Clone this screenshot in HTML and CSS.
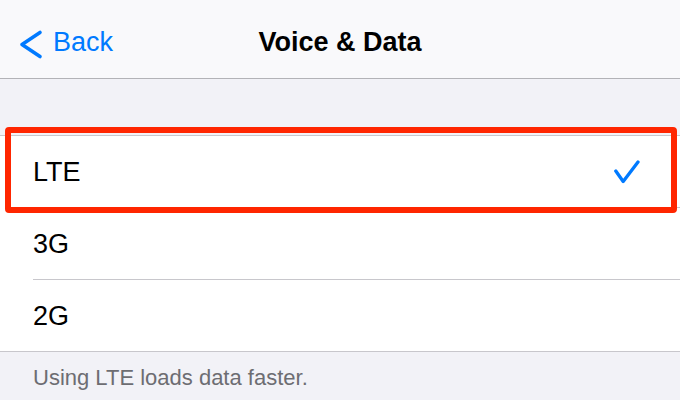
FILE: index.html
```html
<!DOCTYPE html>
<html lang="en">
<head>
  <meta charset="UTF-8">
  <meta name="viewport" content="width=device-width, initial-scale=1.0">
  <title>Voice &amp; Data</title>
  <link rel="stylesheet" href="styles.css">
</head>
<body>
  <div class="nav-bar">
    <a class="back-link" href="#">
      <svg class="back-chevron" width="24" height="32" viewBox="0 0 24 32">
        <polyline points="21,5.5 3,17.5 21,29.5" fill="none" stroke="#007aff" stroke-width="3.6" stroke-linecap="round" stroke-linejoin="round"/>
      </svg>
      <span>Back</span>
    </a>
    <div class="nav-title">Voice &amp; Data</div>
    <div></div>
  </div>

  <div class="settings-group">
    <div class="settings-row selected">
      <span class="row-label">LTE</span>
      <svg class="check-mark" width="26" height="24" viewBox="0 0 26 24">
        <polyline points="1.8,11 9.2,21.5 24,2" fill="none" stroke="#007aff" stroke-width="3.3" stroke-linecap="round" stroke-linejoin="round"/>
      </svg>
      <span class="highlight"></span>
    </div>
    <div class="settings-row">
      <span class="row-label">3G</span>
    </div>
    <div class="settings-row">
      <span class="row-label">2G</span>
    </div>
  </div>

  <p class="group-footer">Using LTE loads data faster.</p>
</body>
</html>
```

FILE: styles.css
```css
body {
  margin: 0;
  padding: 0;
  background-color: #f2f2f7;
  font-family: "Liberation Sans", Arial, sans-serif;
  color: #000;
}

.nav-bar {
  display: grid;
  grid-template-columns: 1fr auto 1fr;
  align-items: center;
  height: 71px;
  padding-top: 7px;
  background-color: #f9f9fb;
  border-bottom: 1px solid #b3b3b7;
}

.back-link {
  display: flex;
  align-items: center;
  padding-left: 19px;
  color: #007aff;
  text-decoration: none;
  font-size: 27px;
}

.back-chevron {
  margin-right: 10px;
}

.nav-title {
  font-size: 27px;
  font-weight: bold;
}

.settings-group {
  margin-top: 56px;
  background-color: #fff;
  border-top: 1px solid #c8c7cc;
  border-bottom: 1px solid #c8c7cc;
}

.settings-row {
  position: relative;
  display: flex;
  align-items: center;
  justify-content: space-between;
  height: 72px;
  margin-left: 33px;
  padding-right: 40px;
  box-sizing: border-box;
  border-bottom: 1px solid #c8c7cc;
}

.settings-row:last-child {
  height: 71px;
  border-bottom: none;
}

.row-label {
  font-size: 27px;
  padding-top: 2px;
}

.highlight {
  position: absolute;
  top: -9px;
  left: -28px;
  right: 3px;
  bottom: -6px;
  border: 6px solid #ff2600;
  border-radius: 4px;
}

.group-footer {
  margin: 0;
  padding: 13px 0 0 33px;
  font-size: 22px;
  color: #6d6d72;
}
```
